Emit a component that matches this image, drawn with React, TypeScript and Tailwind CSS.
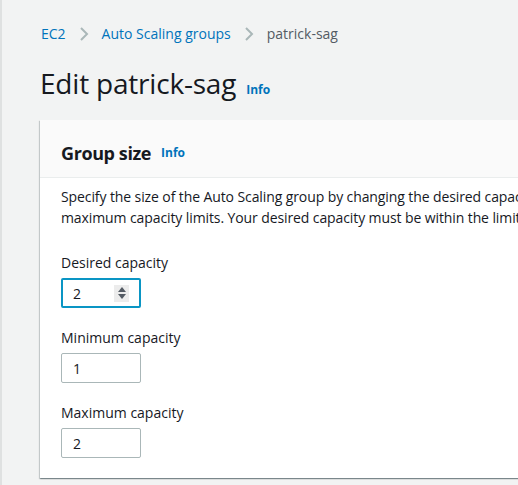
import React from "react";

const Info = ({ className = "" }: { className?: string }) => (
  <a className={`text-[12px] font-bold text-[#0073bb] ${className}`}>Info</a>
);

const Chevron = () => (
  <svg width="10" height="16" viewBox="0 0 10 16" className="mx-[13px]">
    <path d="M2 2l6 6-6 6" fill="none" stroke="#aab7b8" strokeWidth="2" />
  </svg>
);

const Field = ({
  label,
  value,
  focused,
}: {
  label: string;
  value: string;
  focused?: boolean;
}) => (
  <div>
    <p className="text-[14px] leading-[20px] text-[#16191f]">{label}</p>
    <div
      className={`mt-[5px] w-[80px] h-[30px] rounded-[2px] flex items-center pr-[10px] bg-white ${
        focused ? "border-2 border-[#0a95c4] pl-[10px]" : "border border-[#aab7b8] pl-[11px]"
      }`}
    >
      <span className="flex-1 text-[14px] text-[#16191f]">{value}</span>
      {focused && (
        <span className="w-[15px] h-[17px] bg-[#ececec] flex flex-col items-center justify-center gap-[2px]">
          <svg width="8" height="5" viewBox="0 0 8 5">
            <path d="M0 5L4 0l4 5z" fill="#545b64" />
          </svg>
          <svg width="8" height="5" viewBox="0 0 8 5">
            <path d="M0 0l4 5 4-5z" fill="#545b64" />
          </svg>
        </span>
      )}
    </div>
  </div>
);

export default function App() {
  return (
    <div
      className="w-[518px] h-[485px] overflow-hidden bg-[#f2f3f3] border-l-2 border-[#dfe1e1]"
      style={{ fontFamily: '"Open Sans", Arial, sans-serif' }}
    >
      <div className="pl-[38px] pt-[24px]">
        <nav className="flex items-center text-[14px] leading-[20px] pl-[1px]">
          <a className="text-[#0073bb]">EC2</a>
          <Chevron />
          <a className="text-[#0073bb]">Auto Scaling groups</a>
          <Chevron />
          <span className="text-[#545b64]">patrick-sag</span>
        </nav>
        <div className="mt-[21px] flex items-baseline gap-[10px]">
          <h1 className="text-[28px] leading-[36px] text-[#16191f] tracking-[-0.2px]">Edit patrick-sag</h1>
          <Info />
        </div>
        <div className="mt-[19px] w-[520px] bg-white shadow-[0_1px_1px_0_rgba(0,28,36,0.3),1px_1px_1px_0_rgba(0,28,36,0.15),-1px_1px_1px_0_rgba(0,28,36,0.15)]">
          <div className="h-[58px] bg-[#fafafa] border-b border-[#eaeded] flex items-center pl-[21px] pt-[9px] gap-[10px]">
            <h2 className="text-[18px] font-bold text-[#16191f] tracking-[-0.4px]">Group size</h2>
            <Info />
          </div>
          <div className="pl-[21px] pt-[8px] pb-[20px] whitespace-nowrap">
            <p className="text-[14px] leading-[21px] text-[#16191f] tracking-[-0.1px]">
              Specify the size of the Auto Scaling group by changing the desired capacity. You can also specify minimum and
              <br />
              maximum capacity limits. Your desired capacity must be within the limit range.
            </p>
            <div className="mt-[25px] flex flex-col gap-[20px]">
              <Field label="Desired capacity" value="2" focused />
              <Field label="Minimum capacity" value="1" />
              <Field label="Maximum capacity" value="2" />
            </div>
          </div>
        </div>
      </div>
    </div>
  );
}
